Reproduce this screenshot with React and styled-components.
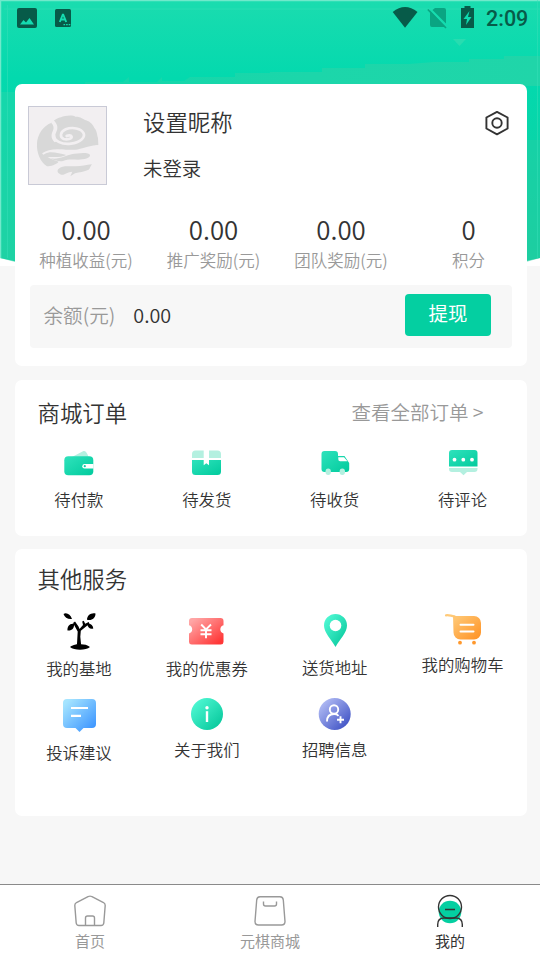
import React from 'react';
import styled, { createGlobalStyle } from 'styled-components';

const GlobalStyle = createGlobalStyle`
  * {
    box-sizing: border-box;
  }
  body {
    margin: 0;
    background: #f7f7f7;
    font-family: 'Noto Sans CJK SC', sans-serif;
    font-weight: 350;
    color: #333;
  }
`;

const Page = styled.div`
  position: relative;
  display: flex;
  flex-direction: column;
  width: 540px;
  height: 960px;
  overflow: hidden;
`;

const Backdrop = styled.svg`
  position: absolute;
  top: 0;
  left: 0;
  z-index: -1;
`;

const StatusBar = styled.div`
  display: flex;
  justify-content: space-between;
  height: 84px;
  flex: none;
`;

const Clock = styled.span`
  font: 500 21.5px/37px Roboto, sans-serif;
  color: #075b49;
  width: 54px;
`;

const StatusRight = styled.div`
  display: flex;
`;

const Content = styled.main`
  flex: 1;
  display: flex;
  flex-direction: column;
  gap: 13.5px;
  padding: 0 13.5px 0 15px;
`;

const Card = styled.section`
  height: ${p => p.$height}px;
  flex: none;
  background: #fff;
  border-radius: 7px;
`;

const Profile = styled.div`
  display: flex;
  padding: 22px 17px 0 13px;
`;

const Avatar = styled.div`
  width: 79px;
  height: 79px;
  border: 1px solid #c9cad6;
  background: #f2eff1;
`;

const Names = styled.div`
  flex: 1;
  padding-left: 36px;
`;

const Nickname = styled.div`
  font-size: 22.4px;
  line-height: 32px;
  margin-top: -1px;
`;

const LoginState = styled.div`
  margin-top: 17px;
  font-size: 19.4px;
  line-height: 28px;
`;

const Settings = styled.div`
  padding-top: 4px;
`;

const Stats = styled.div`
  display: grid;
  grid-template-columns: repeat(4, 127.5px);
  margin: 28px -6px 0 7.3px;
  text-align: center;
`;

const StatValue = styled.div`
  font-size: 25.8px;
  line-height: 32px;
`;

const StatLabel = styled.div`
  font-size: 16.5px;
  line-height: 24px;
  margin-top: 3px;
  color: #999;
`;

const Balance = styled.div`
  display: flex;
  align-items: center;
  height: 63px;
  margin: 13px 15px 0;
  padding: 0 20.5px 0 13.5px;
  border-radius: 4px;
  background: #f7f7f7;
`;

const BalanceLabel = styled.span`
  font-size: 19.6px;
  line-height: 28px;
  padding-bottom: 3px;
  color: #999;
`;

const BalanceValue = styled.span`
  flex: 1;
  padding: 0 0 3px 18px;
  font-size: 19.8px;
  line-height: 28px;
`;

const Withdraw = styled.button`
  width: 86px;
  height: 42px;
  margin-bottom: 3px;
  padding: 0 0 4px;
  border: 0;
  border-radius: 4px;
  background: #04cfa1;
  color: #fff;
  font: 400 19.4px/28px 'Noto Sans CJK SC', sans-serif;
`;

const CardHead = styled.div`
  display: flex;
  justify-content: space-between;
  align-items: flex-start;
  height: ${p => p.$height}px;
  padding: ${p => p.$top}px 43px 0 22.5px;
`;

const Title = styled.h2`
  margin: 0;
  font-size: 22.4px;
  line-height: 32px;
  font-weight: 350;
`;

const More = styled.a`
  padding-top: 2px;
  font-size: 19.5px;
  line-height: 28px;
  color: #999;
`;

const Grid = styled.div`
  display: grid;
  grid-template-columns: repeat(4, 1fr);
  grid-auto-rows: 84px;
`;

const Cell = styled.div`
  display: flex;
  flex-direction: column;
  align-items: center;
  font-size: 16.4px;
  line-height: 24.5px;
  white-space: nowrap;

  svg {
    flex: none;
  }
`;

const TabBar = styled.nav`
  display: grid;
  grid-template-columns: repeat(3, 1fr);
  height: 76px;
  flex: none;
  border-top: 1px solid #8a8a8a;
  background: #fff;
`;

const Tab = styled.div`
  display: flex;
  flex-direction: column;
  align-items: center;
  font-size: 15px;
  line-height: 22px;
  font-weight: 400;
  color: ${p => (p.$active ? '#333' : '#999')};
`;

const HiddenDefs = styled.svg`
  position: absolute;
`;

const Gradient = ({ id, from, to }) => (
  <linearGradient id={id} x1="0" y1="0" x2="1" y2="1">
    <stop offset="0.1" stopColor={from} />
    <stop offset="0.9" stopColor={to} />
  </linearGradient>
);

const Icon = ({ height, children }) => (
  <svg width="44" height={height} viewBox={`0 0 44 ${height}`}>{children}</svg>
);

const Header = () => (
  <Backdrop width="540" height="266">
    <defs>
      <linearGradient id="sky" x1="0" y1="0" x2="0" y2="1">
        <stop offset="0" stopColor="#1bdcaf" />
        <stop offset="0.27" stopColor="#03d9ae" />
        <stop offset="0.6" stopColor="#0bd3a6" />
        <stop offset="1" stopColor="#18cc9b" />
      </linearGradient>
      <linearGradient id="hill" x1="0" y1="0" x2="1" y2="0">
        <stop offset="0" stopColor="#12d7ab" />
        <stop offset="0.5" stopColor="#1cd6aa" />
        <stop offset="1" stopColor="#20d5a9" />
      </linearGradient>
    </defs>
    <rect width="540" height="266" fill="#fff" />
    <path d="M0 0H540V258Q270 320 0 258Z" fill="url(#sky)" />
    <path d="M85 84v-2h38l6-5v5h28l5-5v4h22l6-4h45v-4h35v-1h52v-4h43v-4h44l25-2h35v-3h35v-3h36v30Z" fill="url(#hill)" />
    <path d="M0 92H15V262L0 258Z" fill="#2bd7aa" opacity="0.45" />
    <path d="M526 140H540V258L526 262Z" fill="#25cda3" opacity="0.5" />
    <path d="M453 39h13l-6.500 7z" fill="#28dcb0" />
    <path d="M0 .5H540M.5 0V258" stroke="#70e9cb" strokeWidth="1.500" />
    <path d="M4 9H540M7.500 5V258M537.500 0V258" stroke="#38dfb8" strokeWidth="1" opacity="0.5" />
  </Backdrop>
);

const StatusIconsLeft = () => (
  <svg width="90" height="36" fill="#075b49">
    <rect x="17" y="8" width="20" height="20" rx="2" />
    <path d="M20 24.500l3.500-4.500 2.500 2.500 3.500-4.500 4.500 6.500z" fill="#15dbb0" />
    <rect x="55" y="9" width="16" height="18" rx="1.500" />
    <path d="M59.800 22l3.200-8 3.200 8M61 19.500h4" fill="none" stroke="#15dbb0" strokeWidth="1.900" strokeLinejoin="bevel" />
    <path d="M63.500 24.700h7" stroke="#15dbb0" strokeWidth="1.300" strokeDasharray="1.600 1" />
  </svg>
);

const StatusIconsRight = () => (
  <svg width="94" height="36" fill="#075b49">
    <path d="M.7 12Q13 2 25.500 12L13 27.700Z" />
    <g fill="#0aa582">
      <path d="M43 8h9a2 2 0 0 1 2 2v13.500L40.500 10zM38 10.500l15.500 16.500H40a2 2 0 0 1-2-2z" />
      <path d="M35.800 9.500L54 28" stroke="#0aa582" strokeWidth="1.600" />
    </g>
    <path d="M69 8h3.500V6h6v2H82v20H69z" />
    <path d="M77.500 11l-6 8h3.500l-1 6 5.500-8h-3.500z" fill="#0fdab0" />
  </svg>
);

const AvatarMark = () => (
  <svg width="77" height="77" viewBox="9 9 231 231" fill="#d8d8d8">
    <path d="M33 118C34 92 52 64 77 56C88 45 97 42 105 40C115 35 139 32 148 38C163 37 171 45 180 49C193 53 202 63 205 72C213 80 213 93 216 102L217 123C196 124 180 131 160 135C134 142 96 129 51 149C74 140 99 148 121 153C104 162 79 158 65 159C74 166 89 169 98 173C89 183 75 186 63 187C43 175 31 146 33 118Z" />
    <path d="M82 47C96 62 97 72 90 86C85 96 88 104 96 110L86 115C76 106 74 94 80 82C85 73 83 64 76 57Z" fill="#f2eff1" />
    <path d="M84 94C84 112 108 122 135 119C162 116 178 101 173 88C166 73 139 68 119 76C103 83 100 99 113 105C123 108 137 105 137 98C136 93 127 93 122 96" fill="none" stroke="#f2eff1" strokeWidth="8" strokeLinecap="round" />
    <path d="M50 150C72 136 105 138 130 143C158 147 188 137 215 126" fill="none" stroke="#f2eff1" strokeWidth="6" />
    <path d="M74 163C98 168 121 154 137 151C153 148 188 143 192 153C194 162 174 167 156 167C139 167 125 165 111 171C99 173 83 169 74 163Z" />
    <path d="M98 194C108 184 127 187 145 187C164 188 179 182 198 181C191 189 194 192 188 197C174 204 160 204 147 208L133 217L139 203C124 203 117 214 106 212C96 208 91 201 98 194Z" />
  </svg>
);

const SettingsIcon = () => (
  <svg width="26" height="26" fill="none" stroke="#333" strokeWidth="1.900">
    <path d="M13 1.900L23.600 7.500V18.500L13 24.300L2.400 18.500V7.500Z" strokeLinejoin="round" />
    <circle cx="13" cy="13" r="4.700" />
  </svg>
);

const orders = [
  {
    text: '待付款',
    icon: (
      <>
        <path d="M15 12l11-5.800c2-.8 4 .8 5.500 5.800z" fill="#b4f0e0" />
        <rect x="7.300" y="11.300" width="29" height="19" rx="4" fill="url(#green)" />
        <path d="M36.500 19H27.500a2.200 2.200 0 0 0 0 4.400h9z" fill="#fff" />
        <circle cx="27.800" cy="21.200" r="1.100" fill="#10cfa5" />
      </>
    ),
  },
  {
    text: '待发货',
    icon: (
      <>
        <path d="M7 13V9a3.500 3.500 0 0 1 3.500-3.500H18.700V13zM24 5.500h8.500A3.500 3.500 0 0 1 36 9v4H24z" fill="#b4f0e0" />
        <path d="M7 15H18.700v5.300l2.600-2 2.700 2V15h12v11.500a3.500 3.500 0 0 1-3.500 3.500h-22A3.500 3.500 0 0 1 7 26.500z" fill="url(#green)" />
      </>
    ),
  },
  {
    text: '待收货',
    icon: (
      <>
        <path d="M11.500 6H22a3 3 0 0 1 3 3v2h6.500l4.700 7v6a3 3 0 0 1-3 3H11.500a3 3 0 0 1-3-3V9a3 3 0 0 1 3-3z" fill="url(#green)" />
        <path d="M25.300 12.300h5.700l3.500 4h-7a2 2 0 0 1-2.200-2z" fill="#fff" />
        <ellipse cx="15.200" cy="26.700" rx="2.700" ry="3.300" fill="#b4f0e0" />
        <ellipse cx="29.300" cy="26.700" rx="2.700" ry="3.300" fill="#b4f0e0" />
      </>
    ),
  },
  {
    text: '待评论',
    icon: (
      <>
        <path d="M11 5h22.500a3 3 0 0 1 3 3v13.500H8V8a3 3 0 0 1 3-3z" fill="url(#green)" />
        <path d="M8 23h28.500v1a3 3 0 0 1-3 3H26l-3.500 3.300L19 27h-8a3 3 0 0 1-3-3z" fill="#b4f0e0" />
        <g fill="#fff">
          <circle cx="13.500" cy="14.700" r="1.900" />
          <circle cx="22.300" cy="14.700" r="1.900" />
          <circle cx="31" cy="14.700" r="1.900" />
        </g>
      </>
    ),
  },
];

const services = [
  {
    text: '我的基地',
    height: 45,
    icon: (
      <>
        <path d="M20 33L20.700 20.500L16 12l2-1.500 3.500 5 1 2.500 3.500-4-.8-3.500 1.500-.8 1.500 3 3.500-1.700 .8 1.700-8.700 7-.5 6 .8 8z" />
        <path d="M6.500 3C9.500 1 13.500 3.500 15 8C11 8.500 7.500 6.500 6.500 3zM38.500 2.500C38.500 7 35 10 30 8.800C30 4.500 34 1.500 38.500 2.500zM17 13c.5 4-2 7-6.500 6.500C10 15.500 13 12 17 13zM30 13c3.500-.8 6 1.500 6.300 4.500C33 18.500 31 16.500 30 13z" />
        <path d="M13 36c4-3 6.500-2 8-3.500 1-.7 2 0 3 .8 3 .2 6.500.5 9 2.700-4 3.500-16 3.500-20 0z" />
      </>
    ),
  },
  {
    text: '我的优惠券',
    height: 45,
    icon: (
      <>
        <path d="M7 7h28.500a3 3 0 0 1 3 3v4.200a4.300 4.300 0 0 0 0 8.300V31a2.700 2.700 0 0 1-2.700 2.500H6.700A2.700 2.700 0 0 1 4 31v-8.500a4.300 4.300 0 0 0 0-8.300V10a3 3 0 0 1 3-3z" fill="url(#red)" />
        <path d="M16.200 13.500l4.800 5 5-5M21 18.500v8.700M15.500 19.300h11M15.500 23.300h11" stroke="#fff" strokeWidth="1.900" fill="none" />
      </>
    ),
  },
  {
    text: '送货地址',
    height: 44,
    icon: (
      <>
        <path d="M22.500 36C18 28 11 21.500 11 14.500a11.500 11.500 0 0 1 23 0C34 21.500 27 28 22.500 36z" fill="url(#mint)" />
        <circle cx="22.500" cy="14.500" r="5.800" fill="#fff" />
      </>
    ),
  },
  {
    text: '我的购物车',
    height: 41,
    icon: (
      <>
        <path d="M5 4.300c3-.5 5 .7 8.500 1" stroke="#ffca79" strokeWidth="2.200" fill="none" strokeLinecap="round" />
        <path d="M12 5H33a7 7 0 0 1 7 7v9.500a7 7 0 0 1-7 7H19.500a7 7 0 0 1-7-7z" fill="url(#orange)" />
        <path d="M19.500 13.800h13M19.500 20.500h13" stroke="#fff" strokeWidth="2" strokeLinecap="round" />
        <circle cx="19" cy="31.700" r="1.900" fill="#ff982c" />
        <circle cx="33" cy="31.700" r="1.900" fill="#ff982c" />
      </>
    ),
  },
  {
    text: '投诉建议',
    height: 45,
    icon: (
      <>
        <path d="M10 4h25a4 4 0 0 1 4 4v21a4 4 0 0 1-4 4h-8.500l-4 4-4-4H10a4 4 0 0 1-4-4V8a4 4 0 0 1 4-4z" fill="url(#blue)" />
        <path d="M14 13h17M14 20.800h10" stroke="#fff" strokeWidth="2.200" />
      </>
    ),
  },
  {
    text: '关于我们',
    height: 42,
    icon: (
      <>
        <circle cx="22" cy="19" r="16" fill="url(#mint)" />
        <circle cx="22" cy="12.800" r="1.700" fill="#fff" />
        <path d="M22 16.200V27" stroke="#fff" strokeWidth="2.400" />
      </>
    ),
  },
  {
    text: '招聘信息',
    height: 42,
    icon: (
      <>
        <circle cx="21.700" cy="19" r="16" fill="url(#indigo)" />
        <g fill="none" stroke="#fff" strokeWidth="1.900">
          <circle cx="21" cy="14.500" r="4.200" />
          <path d="M14 26.500c0-5 3-7.500 7-7.500 2 0 3.500.6 4.600 1.800M24 24.700h7M27.500 21.200v7" />
        </g>
      </>
    ),
  },
];

const tabs = [
  {
    text: '首页',
    icon: (
      <g fill="none" stroke="#999" strokeWidth="1.400">
        <path d="M20.500 11.500Q22 10.700 23.500 11.500L35.500 17.500Q37.300 18.500 37.200 20.500L35.800 38Q35.500 40.500 33 40.500H11Q8.500 40.500 8.200 38L6.800 20.500Q6.700 18.500 8.500 17.500Z" />
        <path d="M17.500 40.500V33a2 2 0 0 1 2-2h5a2 2 0 0 1 2 2v7.500" />
      </g>
    ),
  },
  {
    text: '元棋商城',
    icon: (
      <g fill="none" stroke="#999" strokeWidth="1.400">
        <path d="M12 11.800H32Q35 11.800 35.300 15L37 36.500Q37 40 33.500 40H10.500Q7 40 7 36.500L8.700 15Q9 11.800 12 11.800Z" />
        <path d="M15.500 16.500v2.500q0 2 2 2h9q2 0 2-2v-2.500" />
      </g>
    ),
  },
  {
    text: '我的',
    active: true,
    icon: (
      <>
        <circle cx="22" cy="27" r="11.300" fill="#04cfa1" />
        <g fill="none" stroke="#333" strokeWidth="1.400">
          <circle cx="22" cy="22" r="11.500" />
          <path d="M17 24.500h10M9.700 42v-2.500q0-6.500 6.500-6.500h11.600q6.500 0 6.500 6.500V42" />
        </g>
      </>
    ),
  },
];

const stats = [
  ['0.00', '种植收益(元)'],
  ['0.00', '推广奖励(元)'],
  ['0.00', '团队奖励(元)'],
  ['0', '积分'],
];

const App = () => {
  return (
    <Page>
      <GlobalStyle />
      <Header />
      <HiddenDefs width="0" height="0">
        <defs>
          <Gradient id="green" from="#2be0b9" to="#05cda0" />
          <Gradient id="mint" from="#4ff8d3" to="#08c99d" />
          <Gradient id="red" from="#ffa5a5" to="#ff3737" />
          <Gradient id="orange" from="#ffc571" to="#ff962a" />
          <Gradient id="blue" from="#a4e4ff" to="#3f97ff" />
          <Gradient id="indigo" from="#b3bdf5" to="#4053c5" />
        </defs>
      </HiddenDefs>
      <StatusBar>
        <StatusIconsLeft />
        <StatusRight>
          <StatusIconsRight />
          <Clock>2:09</Clock>
        </StatusRight>
      </StatusBar>
      <Content>
        <Card $height={282}>
          <Profile>
            <Avatar><AvatarMark /></Avatar>
            <Names>
              <Nickname>设置昵称</Nickname>
              <LoginState>未登录</LoginState>
            </Names>
            <Settings><SettingsIcon /></Settings>
          </Profile>
          <Stats>
            {stats.map(([value, label]) => (
              <div key={label}>
                <StatValue>{value}</StatValue>
                <StatLabel>{label}</StatLabel>
              </div>
            ))}
          </Stats>
          <Balance>
            <BalanceLabel>余额(元)</BalanceLabel>
            <BalanceValue>0.00</BalanceValue>
            <Withdraw>提现</Withdraw>
          </Balance>
        </Card>
        <Card $height={156}>
          <CardHead $height={65.5} $top={16}>
            <Title>商城订单</Title>
            <More>查看全部订单 &gt;</More>
          </CardHead>
          <Grid>
            {orders.map(item => (
              <Cell key={item.text}>
                <Icon height={42}>{item.icon}</Icon>
                {item.text}
              </Cell>
            ))}
          </Grid>
        </Card>
        <Card $height={267}>
          <CardHead $height={62} $top={13}>
            <Title>其他服务</Title>
          </CardHead>
          <Grid>
            {services.map(item => (
              <Cell key={item.text}>
                <Icon height={item.height}>{item.icon}</Icon>
                {item.text}
              </Cell>
            ))}
          </Grid>
        </Card>
      </Content>
      <TabBar>
        {tabs.map(tab => (
          <Tab key={tab.text} $active={tab.active}>
            <Icon height={45}>{tab.icon}</Icon>
            {tab.text}
          </Tab>
        ))}
      </TabBar>
    </Page>
  );
};

export default App;
